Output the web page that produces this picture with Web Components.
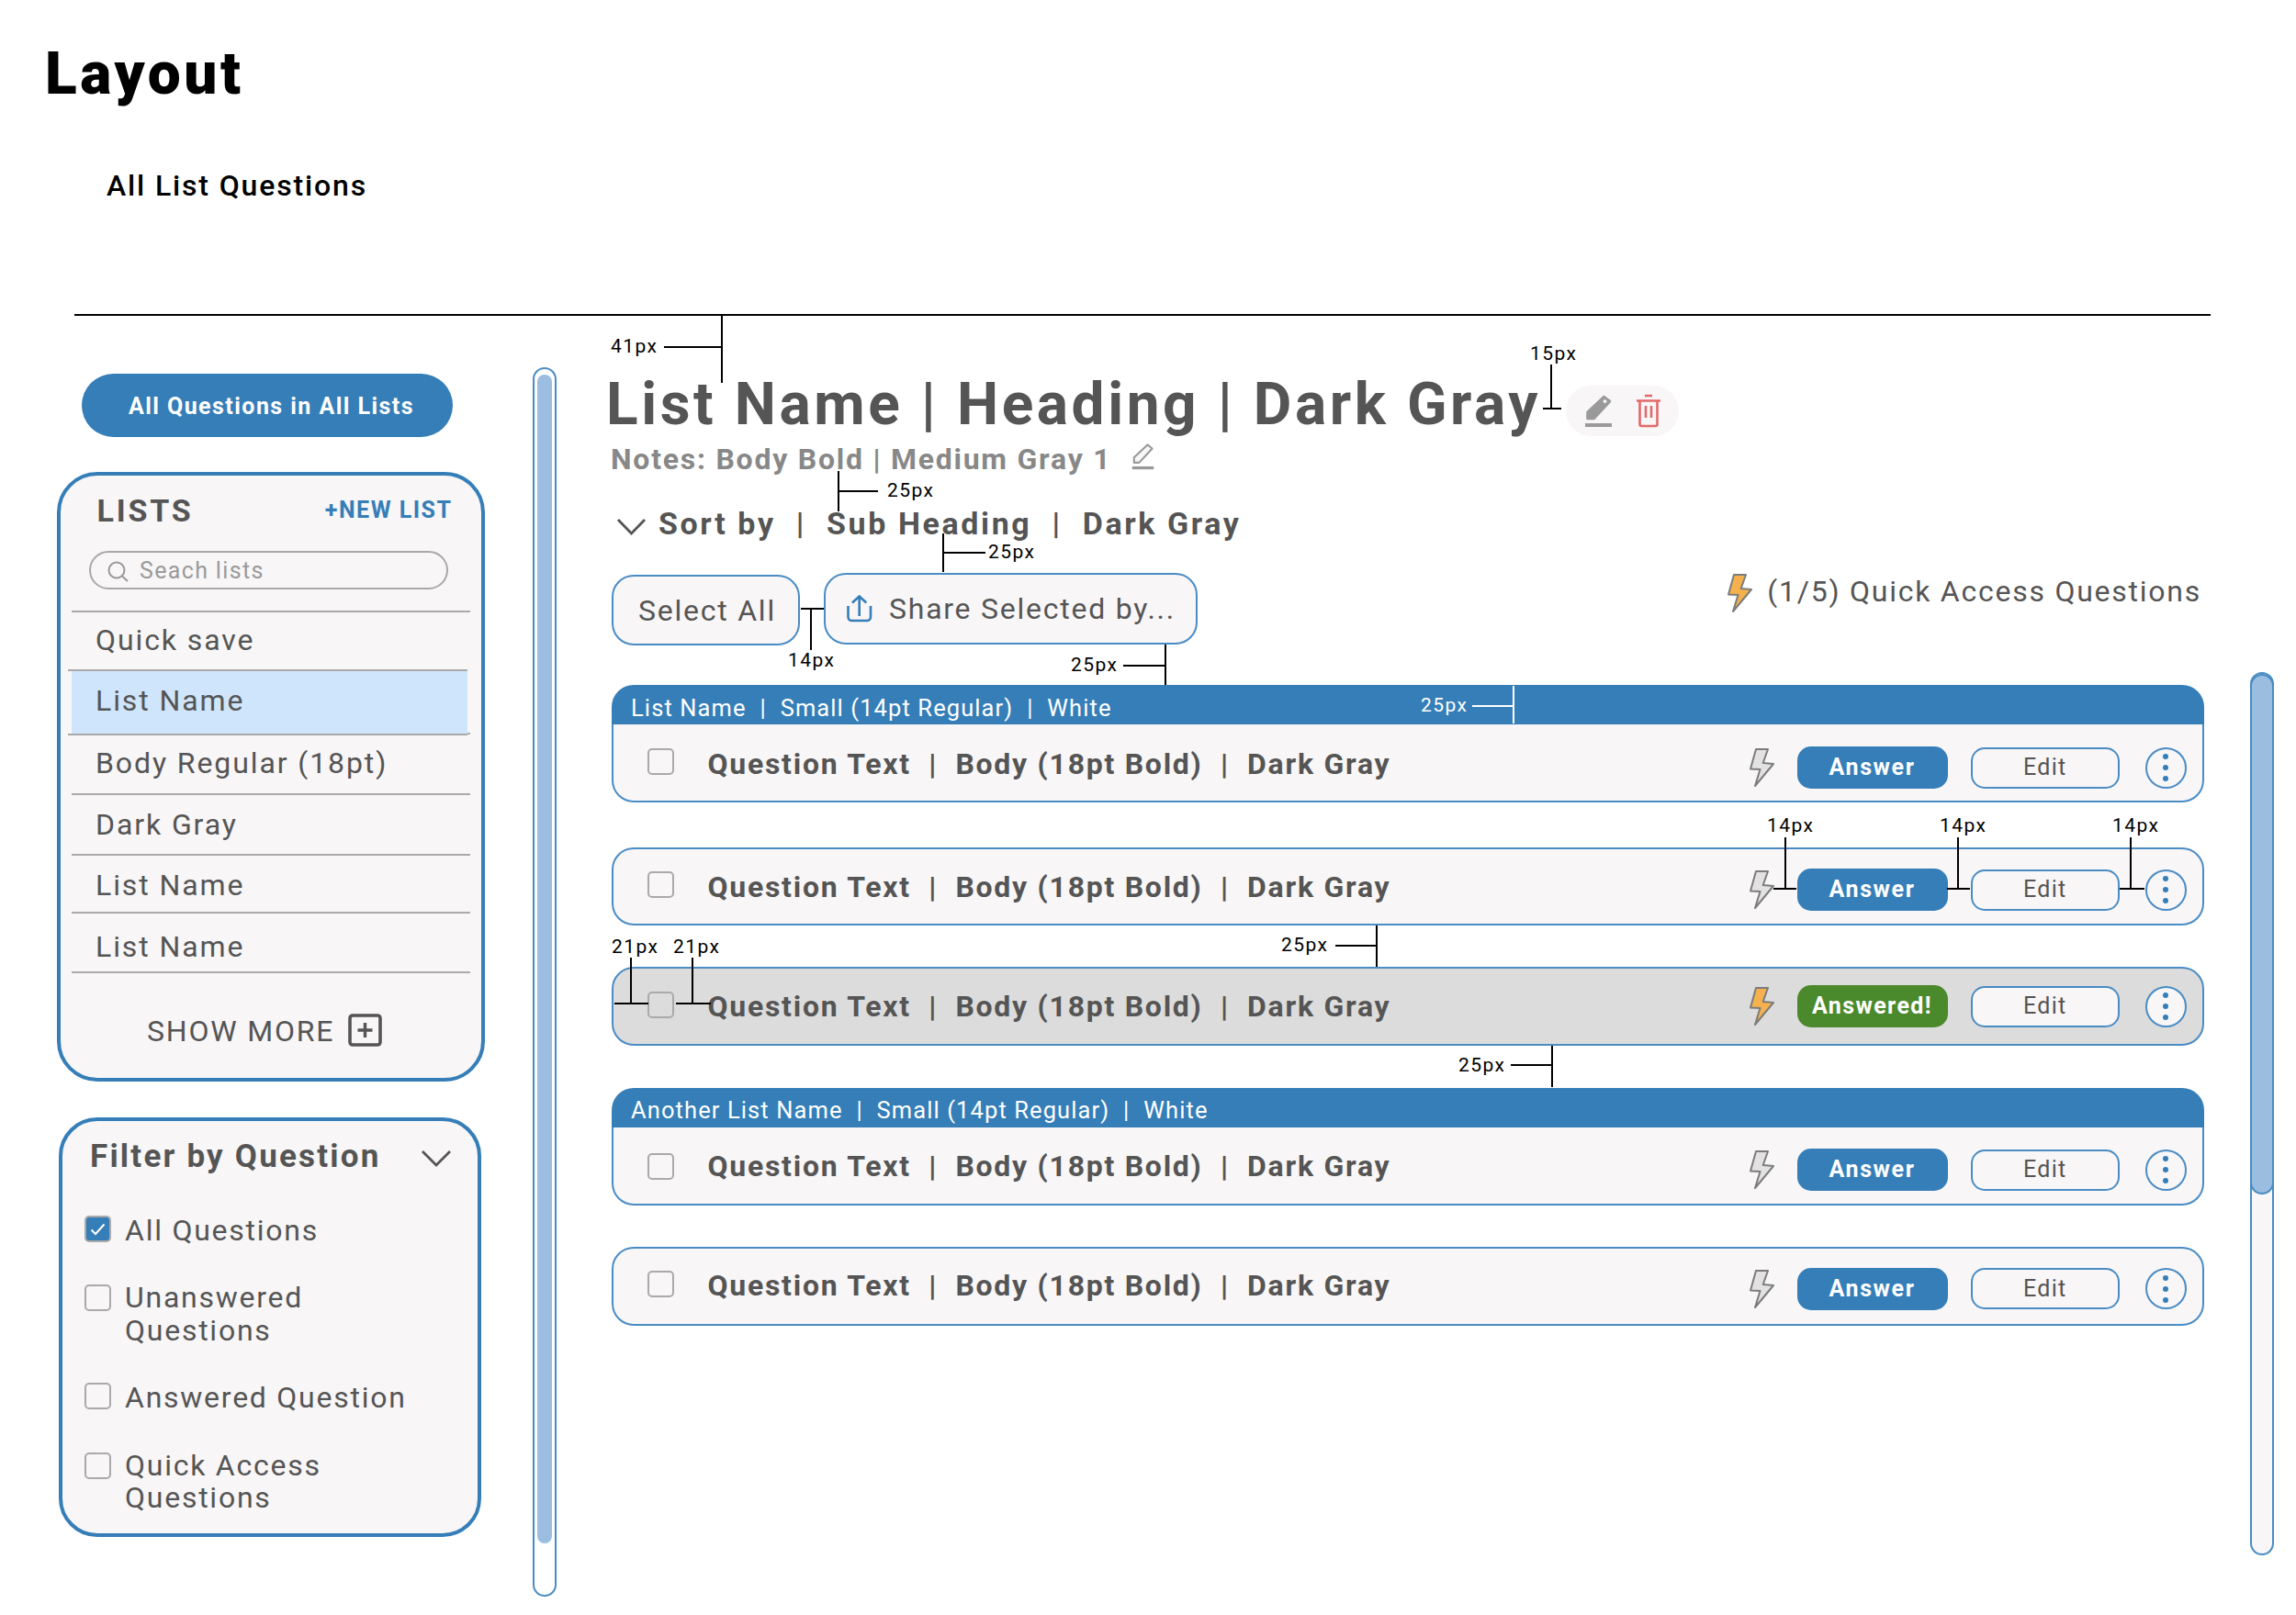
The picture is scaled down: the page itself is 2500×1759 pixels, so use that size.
<!DOCTYPE html>
<html lang="en">
<head>
<meta charset="utf-8">
<title>Layout</title>
<style>
html,body{margin:0;padding:0;background:#fff;font-family:Roboto,"Liberation Sans",sans-serif;}
</style>
</head>
<body>
<layout-page>
  <doc-title slot="title">Layout</doc-title>
  <side-column slot="side">
    <pill-button>All Questions in All Lists</pill-button>
    <lists-card>
      <side-item style="--h:64.5px;--p:16.7px">Quick save</side-item>
      <side-item selected style="--h:71.5px;--p:18.6px">List Name</side-item>
      <side-item style="--h:65.6px;--p:17px">Body Regular (18pt)</side-item>
      <side-item style="--h:65.8px;--p:18.5px">Dark Gray</side-item>
      <side-item style="--h:63px;--p:18.7px">List Name</side-item>
      <side-item last style="--h:67px;--p:22.6px">List Name</side-item>
    </lists-card>
    <filter-card>
      <filter-option checked style="--cb:1.5px">All Questions</filter-option>
      <filter-option style="--cb:3.2px">Unanswered<br>Questions</filter-option>
      <filter-option style="--cb:0.7px">Answered Question</filter-option>
      <filter-option style="--cb:3.2px">Quick Access<br>Questions</filter-option>
    </filter-card>
  </side-column>
  <scroll-track slot="leftbar" style="--mt:56px;--w:26px;--h:1339px;--pad:5.5px;--tw:16px;--th:1273px;--tt:5.5px;--bg:#fff;--tb:none;--tr:8px"></scroll-track>
  <main-column slot="main">
    <list-heading>List Name | Heading | Dark Gray</list-heading>
    <list-notes>Notes: Body Bold | Medium Gray 1</list-notes>
    <sort-bar>Sort by &nbsp;|&nbsp; Sub Heading &nbsp;|&nbsp; Dark Gray</sort-bar>
    <tool-bar></tool-bar>
    <q-group style="--gt:43px;--hh:43px" title-text="List Name &nbsp;|&nbsp; Small (14pt Regular) &nbsp;|&nbsp; White">
      <q-row headed style="--h:85px;--rs:11px;--cs:-2px;--ts:2px">Question Text &nbsp;|&nbsp; Body (18pt Bold) &nbsp;|&nbsp; Dark Gray</q-row>
    </q-group>
    <q-row style="--mt:49px;--h:85px;--rs:7px;--cs:-4px">Question Text &nbsp;|&nbsp; Body (18pt Bold) &nbsp;|&nbsp; Dark Gray</q-row>
    <q-row answered style="--mt:45px;--h:86px;--rs:-2px;--cs:-3px">Question Text &nbsp;|&nbsp; Body (18pt Bold) &nbsp;|&nbsp; Dark Gray</q-row>
    <q-group style="--gt:45.6px;--hh:43.4px" title-text="Another List Name &nbsp;|&nbsp; Small (14pt Regular) &nbsp;|&nbsp; White">
      <q-row headed style="--h:85px;--rs:10px;--cs:2px;--ts:1px">Question Text &nbsp;|&nbsp; Body (18pt Bold) &nbsp;|&nbsp; Dark Gray</q-row>
    </q-group>
    <q-row style="--mt:45px;--h:86px;--rs:6px;--cs:-4px;--ts:-1px">Question Text &nbsp;|&nbsp; Body (18pt Bold) &nbsp;|&nbsp; Dark Gray</q-row>
  </main-column>
  <scroll-track slot="rightbar" style="--mt:388px;--w:25.5px;--h:962px;--pad:0px;--tw:25.5px;--th:567px;--tt:0px;--bg:#f8f6f7;--tb:2.5px solid #4a8cc4;--tr:13px"></scroll-track>
  <spec-overlay slot="overlay"></spec-overlay>
</layout-page>

<script>
const BLUE='#357eb8', EDGE='#4a8cc4', DARK='#555', PANEL='#f8f6f7';
function def(name, html, init){
  customElements.define(name, class extends HTMLElement{
    constructor(){super();const r=this.attachShadow({mode:'open'});r.innerHTML=typeof html==='function'?html(this):html;}
    connectedCallback(){ if(init) init(this); }
  });
}
const boltPts='7,1 20,1 14.7,16 26,17 6,41 11.5,23 1,22.5';

def('bolt-icon',`<style>:host{display:block;width:27px;height:42px}svg{display:block}
polygon{fill:var(--fill,#e2e2e2);stroke:#7c7c7c;stroke-width:2;stroke-linejoin:round}</style>
<svg width="27" height="42" viewBox="0 0 27 42"><polygon points="${boltPts}"/></svg>`);

def('pencil-icon',`<style>:host{display:block;width:var(--w,29px);height:var(--ph,37px);color:#9a9a9a}svg{display:block;width:100%;height:100%}</style>
<svg viewBox="0 0 29 37"><rect x="0" y="32" width="29" height="4" fill="currentColor"/>
<path d="M2.5 27V20L20.5 3L27 8L9.5 27Z" fill="var(--pf,#9a9a9a)" stroke="currentColor" stroke-width="2.6" stroke-linejoin="round"/>
<rect x="-1.7" y="-1.7" width="3.4" height="3.4" transform="translate(21.5 8.2) rotate(42)" fill="#f8f6f7"/></svg>`);

def('layout-page',`<style>
:host{display:block;position:relative;width:2500px;height:1759px;overflow:hidden}
.body{display:flex;align-items:flex-start;padding-left:62px}
.rule{height:2px;background:#000;margin:0 93px 0 81px}
.left{margin-left:52px}.main{margin-left:60px}.right{margin-left:50px}
</style>
<slot name="title"></slot>
<div class="rule"></div>
<div class="body">
  <slot name="side"></slot>
  <div class="left"><slot name="leftbar"></slot></div>
  <div class="main"><slot name="main"></slot></div>
  <div class="right"><slot name="rightbar"></slot></div>
</div>
<slot name="overlay"></slot>`);

def('doc-title',`<style>
:host{display:block;height:342px;box-sizing:border-box;color:#000}
h1{margin:0;padding:49px 0 0 49px;font:900 64px/64px Roboto,sans-serif;letter-spacing:3.6px}
h2{margin:0;padding:73px 0 0 116px;font:500 32px/32px Roboto,sans-serif;letter-spacing:1.85px}
</style><h1><slot></slot></h1><h2>All List Questions</h2>`);

def('side-column',`<style>:host{display:block;width:466px;flex:none}</style><slot></slot>`);

def('pill-button',`<style>
:host{display:flex;align-items:center;justify-content:center;box-sizing:border-box;margin:63px 0 0 27px;width:404px;height:68.5px;padding:3px 0 0 9px;border-radius:35px;background:${BLUE};color:#fff;font:700 25px/30px Roboto,sans-serif;letter-spacing:1.45px}
</style><slot></slot>`);

def('lists-card',`<style>
:host{display:block;box-sizing:border-box;margin-top:38.5px;height:664px;border:4px solid ${BLUE};border-radius:44px;background:${PANEL};color:${DARK}}
.top{display:flex;justify-content:space-between;align-items:flex-start;padding:21.4px 31.5px 0 39.5px}
.t{font:700 34px/34px Roboto,sans-serif;letter-spacing:2.8px}
.n{font:700 25px/30px Roboto,sans-serif;letter-spacing:1.5px;color:${BLUE};margin-top:2px}
.search{display:flex;align-items:center;box-sizing:border-box;margin:27px 0 23px 31px;width:391px;height:41.5px;border:2.5px solid #a8a8a8;border-radius:21px;padding-left:18px;gap:11px;color:#9a9a9a;font:400 25px/30px Roboto,sans-serif;letter-spacing:1.35px}
.search span{margin-top:1.5px}
.search svg{flex:none;margin-top:3px}
.list{display:block}
.more{display:flex;align-items:flex-start;justify-content:flex-start;padding:47px 0 0 94px;font:400 32px/32px Roboto,sans-serif;letter-spacing:1.8px;gap:15px}
.more svg{flex:none;margin-top:-2.5px}
</style>
<div class="top"><span class="t">LISTS</span><span class="n">+NEW LIST</span></div>
<div class="search"><svg width="24" height="24" viewBox="0 0 24 24" fill="none" stroke="#9a9a9a" stroke-width="2"><circle cx="10" cy="10" r="8.5"/><path d="M16 16.5l6 5.5"/></svg><span>Seach lists</span></div>
<div class="list"><slot></slot></div>
<div class="more"><span>SHOW MORE</span><svg width="37" height="36" viewBox="0 0 37 36"><rect x="2" y="2" width="33" height="32" rx="3" fill="none" stroke="#555" stroke-width="3.6"/><path d="M18.5 10v16M10.5 18h16" stroke="#555" stroke-width="3.4" fill="none"/></svg></div>`);

def('side-item',`<style>
:host{display:block;box-sizing:border-box;margin-left:11.5px;width:434.5px;height:var(--h);border-top:2.5px solid #aaa;font:400 32px/32px Roboto,sans-serif;letter-spacing:1.9px;color:${DARK}}
:host([selected]){margin-left:8px;width:435px;border-bottom:2.5px solid #aaa;margin-bottom:-2.5px;position:relative}
:host([last]){border-bottom:2.5px solid #aaa}
.i{height:100%;box-sizing:border-box;padding:var(--p) 0 0 26.5px;margin-top:-2.5px}
:host([selected]) .i{background:#cfe5fb;margin:0 0 0 3.5px;padding-top:calc(var(--p) - 2.5px);padding-left:26.5px;height:100%}
</style><div class="i"><slot></slot></div>`);

def('filter-card',`<style>
:host{display:block;box-sizing:border-box;margin:39px 0 0 2px;width:460px;height:457px;border:4px solid ${BLUE};border-radius:42px;background:${PANEL};color:${DARK};padding:20.6px 0 0 24px}
.h{display:flex;align-items:flex-start;justify-content:space-between;padding:0 28.5px 0 6px;font:700 35px/35px Roboto,sans-serif;letter-spacing:2.2px;margin-bottom:46.2px}
.h svg{margin-top:10px;flex:none}
.o{display:flex;flex-direction:column;gap:38px}
</style>
<div class="h"><span>Filter by Question</span><svg width="34" height="19" viewBox="0 0 34 19" fill="none" stroke="#555" stroke-width="2.8"><path d="M2 2l15 15L32 2"/></svg></div>
<div class="o"><slot></slot></div>`);

def('filter-option',(el)=>`<style>
:host{display:flex;align-items:flex-start;gap:15px;font:400 32px/35.5px Roboto,sans-serif;letter-spacing:1.75px;color:${DARK}}
.c{flex:none;box-sizing:border-box;width:29px;height:29px;margin-top:var(--cb);border:2.5px solid #aaa;border-radius:5px;background:${PANEL};display:flex;align-items:center;justify-content:center}
:host([checked]) .c{background:${BLUE}}
</style><span class="c">${el.hasAttribute('checked')?'<svg width="17" height="14" viewBox="0 0 17 14" fill="none" stroke="#fff" stroke-width="2"><path d="M1.5 7.5l4.5 4.5L15.5 1.5"/></svg>':''}</span><span><slot></slot></span>`);

def('scroll-track',`<style>
:host{display:block;box-sizing:border-box;margin-top:var(--mt);width:var(--w);height:var(--h);border:2.5px solid ${EDGE};border-radius:14px;background:var(--bg);position:relative}
.w{display:flex;justify-content:center;height:100%;margin:0 -2.5px}
.t{box-sizing:border-box;width:var(--tw);height:var(--th);margin-top:var(--tt);background:#9abde0;border:var(--tb);border-radius:var(--tr);flex:none}
</style><div class="w"><div class="t"></div></div>`);

def('main-column',`<style>:host{display:block;width:1734px;flex:none;color:${DARK}}</style><slot></slot>`);

def('list-heading',`<style>
:host{display:flex;align-items:flex-start;margin-top:64.5px;height:66.5px}
h3{margin:0 0 0 -6px;font:700 64px/64px Roboto,sans-serif;letter-spacing:3.55px;white-space:nowrap}
.p{flex:none;display:flex;align-items:center;justify-content:space-between;box-sizing:border-box;margin:11.5px 0 0 27px;width:123px;height:55px;border-radius:28px;background:${PANEL};padding:0 20px 0 21px}
</style><h3><slot></slot></h3>
<div class="p"><pencil-icon></pencil-icon><svg width="26" height="37" viewBox="0 0 26 37" fill="none" stroke="#e26a6a" stroke-width="2.6"><path d="M9 2h8M0 7.5h26M3.5 7.5V33a2 2 0 0 0 2 2h15a2 2 0 0 0 2-2V7.5M10 13v13M16 13v13"/></svg></div>`);

def('list-notes',`<style>
:host{display:flex;align-items:flex-start;margin-top:9px;height:32px;font:700 32px/32px Roboto,sans-serif;letter-spacing:1.75px;color:#888}
span{margin-left:-1px;white-space:nowrap}
pencil-icon{--w:25px;--ph:30px;--pf:#f8f6f7;margin:-2px 0 0 22px;color:#999}
</style><span><slot></slot></span><pencil-icon></pencil-icon>`);

def('sort-bar',`<style>
:host{display:flex;align-items:flex-start;margin-top:36.5px;height:34px;font:700 34px/34px Roboto,sans-serif;letter-spacing:2.6px;color:${DARK};white-space:pre}
svg{flex:none;margin:11px 0 0 5px}
span{margin-left:13px}
</style><svg width="33" height="19" viewBox="0 0 33 19" fill="none" stroke="#555" stroke-width="2.8"><path d="M2 2l14.5 15L31 2"/></svg><span><slot></slot></span>`);

def('tool-bar',`<style>
:host{display:flex;align-items:flex-start;margin-top:37.5px;height:79px;font:400 32px/32px Roboto,sans-serif;letter-spacing:1.75px;color:${DARK}}
.b{box-sizing:border-box;display:flex;align-items:center;border:2.5px solid ${EDGE};border-radius:24px;background:${PANEL}}
.a{width:205px;height:77px;margin-top:2px;justify-content:center;padding-left:3px}
.s{width:407px;height:78px;margin-left:26px;padding-left:23px;gap:18px}
.s svg{flex:none}
.q{margin-left:auto;display:flex;align-items:flex-start;gap:16px;padding-right:3px}
.q span{margin-top:4px}
bolt-icon{--fill:#f4b14d;margin-top:1px}
</style>
<div class="b a">Select All</div>
<div class="b s"><svg width="28" height="30" viewBox="0 0 28 30" fill="none" stroke="${BLUE}" stroke-width="2.6"><path d="M13.7 1.5V23M6 8.5L13.7 1.5L21.3 8.5M1.5 12V24a4 4 0 0 0 4 4H22a4 4 0 0 0 4-4V12"/></svg><span>Share Selected by...</span></div>
<div class="q"><bolt-icon></bolt-icon><span>(1/5) Quick Access Questions</span></div>`);

def('q-group',(el)=>`<style>
:host{display:block;margin-top:var(--gt)}
.h{box-sizing:border-box;height:var(--hh);background:${BLUE};border-radius:24px 24px 0 0;color:#fff;font:400 25.5px/30px Roboto,sans-serif;letter-spacing:1.1px;padding:9.5px 0 0 21px;white-space:pre}
</style><div class="h">${el.getAttribute('title-text').replace(/&nbsp;/g,'\u00a0')}</div><slot></slot>`);

def('q-row',`<style>
:host{display:flex;align-items:center;box-sizing:border-box;margin-top:var(--mt,0);height:var(--h);border:2.5px solid ${EDGE};border-radius:24px;background:${PANEL};padding-right:17.5px}
:host([headed]){border-radius:0 0 24px 24px;border-top:0}
:host([answered]){background:#dcdcdc}
.c{flex:none;box-sizing:border-box;width:29px;height:29px;margin:var(--cs,0) 0 0 36.5px;border:2.5px solid #aaa;border-radius:5px}
.t{margin:var(--ts,0) 0 0 37px;font:700 32px/32px Roboto,sans-serif;letter-spacing:1.73px;color:${DARK};white-space:nowrap}
.r{margin-left:auto;flex:none;display:flex;align-items:center;padding-top:var(--rs,0)}
.go{box-sizing:border-box;width:164px;height:46px;margin-left:25px;border-radius:15px;background:${BLUE};color:#fff;display:flex;align-items:center;justify-content:center;font:700 25px/30px Roboto,sans-serif;letter-spacing:1.6px}
:host([answered]) .go{background:#4a8a2c;letter-spacing:1.4px}
.ed{box-sizing:border-box;width:162.5px;height:45px;margin-left:25px;border:2.5px solid ${EDGE};border-radius:15px;background:${PANEL};color:${DARK};display:flex;align-items:center;justify-content:center;font:400 25px/30px Roboto,sans-serif;letter-spacing:1.3px}
.m{box-sizing:border-box;width:45px;height:45px;margin-left:27.5px;border:2.5px solid ${EDGE};border-radius:50%;background:${PANEL};display:flex;flex-direction:column;align-items:center;justify-content:center;gap:6px}
.m i{display:block;width:6px;height:6px;border-radius:50%;background:${BLUE}}
:host([answered]) bolt-icon{--fill:#f4b14d}
</style>
<span class="c"></span><span class="t"><slot></slot></span>
<div class="r"><bolt-icon></bolt-icon><div class="go"></div><div class="ed">Edit</div><div class="m"><i></i><i></i><i></i></div></div>`,
(el)=>{ el.shadowRoot.querySelector('.go').textContent = el.hasAttribute('answered')?'Answered!':'Answer'; });

const LINES=[
 ['v',786,344,417],['h',723,786,378],
 ['v',1689,397,445],['h',1680,1700,445],
 ['v',913,513,557],['h',913,956,535],
 ['v',1027,581,623],['h',1027,1073,602],
 ['h',872,897,663],['v',883,663,708],
 ['h',1223,1269,725],['v',1269,702,746],
 ['h',1603,1648,769,1],['v',1648,747,788,1],
 ['v',1944,912,968],['h',1931,1956,968],
 ['v',2132,912,968],['h',2120,2145,968],
 ['v',2320,912,968],['h',2308,2335,968],
 ['v',687,1043,1093],['h',669,706,1093],
 ['v',754,1043,1093],['h',736,774,1093],
 ['h',1454,1499,1030],['v',1499,1008,1053],
 ['h',1645,1690,1160],['v',1690,1139,1184]
];
const LABELS=[
 [665,370,'41px'],[1666,378,'15px'],[966,527,'25px'],[1076,594,'25px'],[858,712,'14px'],[1166,717,'25px'],[1547,761,'25px',1],
 [1924,892,'14px'],[2112,892,'14px'],[2300,892,'14px'],[666,1024,'21px'],[733,1024,'21px'],[1395,1022,'25px'],[1588,1153,'25px']
];
def('spec-overlay',`<style>
:host{position:absolute;inset:0;display:block;pointer-events:none}
.l{position:absolute;background:#000}
.w{background:#fff}
.x{position:absolute;font:400 21px/21px Roboto,sans-serif;letter-spacing:1.4px;color:#000;white-space:nowrap}
.x.w{background:none;color:#fff}
</style>`+
 LINES.map(l=>l[0]==='v'
  ?`<div class="l${l[4]?' w':''}" style="left:${l[1]-1}px;top:${l[2]}px;width:2px;height:${l[3]-l[2]}px"></div>`
  :`<div class="l${l[4]?' w':''}" style="left:${l[1]}px;top:${l[3]-1}px;width:${l[2]-l[1]}px;height:2px"></div>`).join('')+
 LABELS.map(t=>`<div class="x${t[3]?' w':''}" style="left:${t[0]}px;top:${t[1]-3}px">${t[2]}</div>`).join(''));
</script>
</body>
</html>
